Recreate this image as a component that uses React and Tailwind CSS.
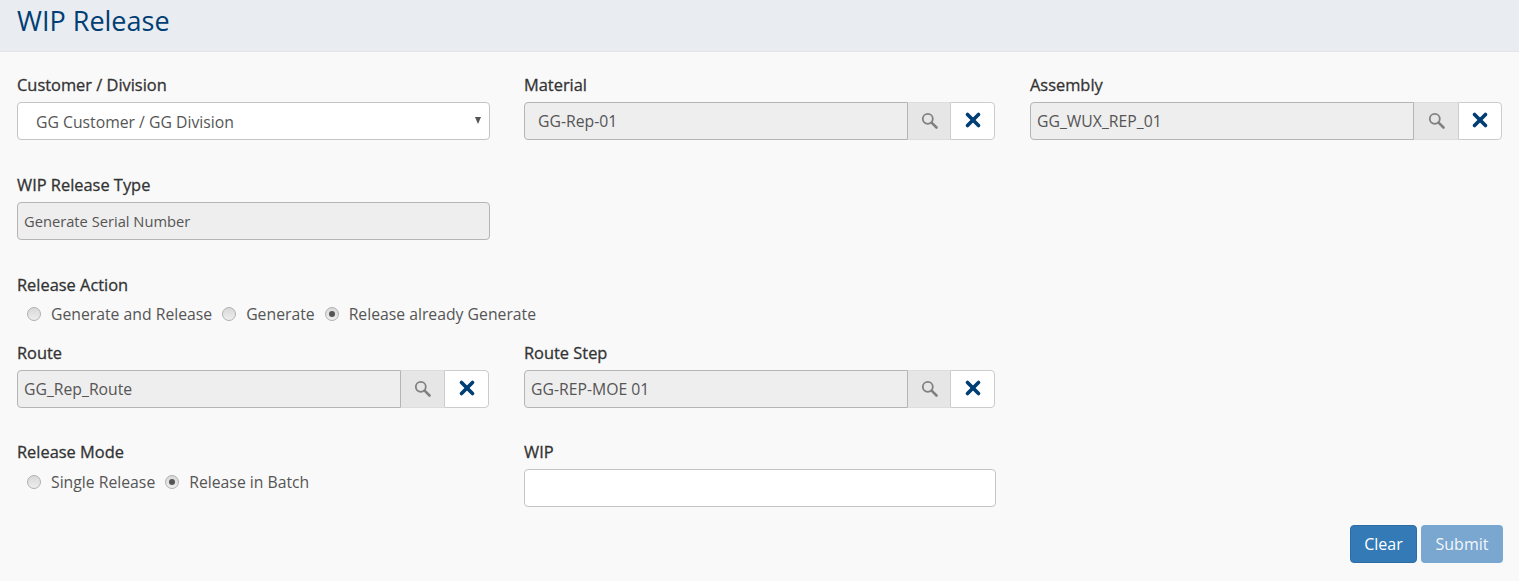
import { X } from 'lucide-react'

function Label({ children, className = '' }) {
  return <div className={`h-[20px] text-[16.4px] leading-[20px] font-medium text-[#333] [-webkit-text-stroke:0.3px_#333] ${className}`}>{children}</div>
}

function SearchGlyph() {
  return (
    <svg width="17" height="17" viewBox="0 0 17 17" className="-mt-[2px]">
      <circle cx="6.8" cy="6.8" r="5" fill="none" stroke="#808080" strokeWidth="1.8" />
      <path d="M10.6 10.6 L15.5 15.5" stroke="#808080" strokeWidth="2.6" strokeLinecap="round" />
    </svg>
  )
}

function LookupField({ label, value, indent = 'pl-[6px]', className = '', searchWidth = 'w-[43px]' }) {
  return (
    <div className={className}>
      <Label className="mb-[7px]">{label}</Label>
      <div className="flex h-[38px]">
        <div className={`w-[384px] flex items-center ${indent} pt-[2px] bg-[#eeeeee] border border-[#b5b5b5] rounded-l-[4px] text-[15.75px] text-[#555]`}>
          {value}
        </div>
        <div className={`${searchWidth} flex items-center justify-center bg-[#e6e6e6] border-y border-[#dddddd]`}>
          <SearchGlyph />
        </div>
        <div className="flex-1 flex items-center justify-center bg-white border border-[#cccccc] rounded-r-[4px]">
          <X size={22} strokeWidth={4} className="text-[#003e74] -mt-[2px]" />
        </div>
      </div>
    </div>
  )
}

function Radio({ label, checked }) {
  return (
    <label className="flex items-center gap-[10px]">
      <span className="w-[14px] h-[14px] rounded-full border border-[#b0b0b0] bg-gradient-to-b from-[#d8d8d8] to-[#eeeeee] flex items-center justify-center">
        {checked && <span className="w-[6px] h-[6px] rounded-full bg-[#555]" />}
      </span>
      <span className="text-[15.75px] leading-[20px] text-[#555]">{label}</span>
    </label>
  )
}

export default function App() {
  return (
    <div className="w-[1519px] h-[581px] overflow-hidden bg-[#f9f9f9] font-['Open_Sans',sans-serif]">
      <div className="h-[52px] bg-[#e9ecf1] border-b border-[#e2e4e8] pl-[17px]">
        <h1 className="text-[27px] leading-[42px] text-[#003e74]">WIP Release</h1>
      </div>

      <div className="px-[17px] pt-[23px]">
        <div className="grid grid-cols-[473px_472px_472px] gap-x-[34px]">
          <div>
            <Label className="mb-[7px]">Customer / Division</Label>
            <div className="relative h-[38px] flex items-center pl-[18px] pt-[4px] bg-white border border-[#c4c4c4] rounded-[4px] text-[15.75px] text-[#555]">
              GG Customer / GG Division
              <span className="absolute right-[8px] top-[14px] w-0 h-0 border-x-[3.5px] border-x-transparent border-t-[7px] border-t-[#555]" />
            </div>
          </div>
          <LookupField label="Material" value="GG-Rep-01" indent="pl-[13px]" className="mr-[1px]" searchWidth="w-[42px]" />
          <LookupField label="Assembly" value="GG_WUX_REP_01" searchWidth="w-[44px]" />
        </div>

        <div className="grid grid-cols-[473px_472px_472px] gap-x-[34px] mt-[35px]">
          <div>
            <Label className="mb-[7px]">WIP Release Type</Label>
            <div className="h-[38px] flex items-center px-[6px] bg-[#eeeeee] border border-[#b5b5b5] rounded-[4px] text-[14.7px] text-[#555]">
              Generate Serial Number
            </div>
          </div>
        </div>

        <div className="mt-[35px]">
          <Label>Release Action</Label>
          <div className="flex gap-[10px] pl-[10px] mt-[9px]">
            <Radio label="Generate and Release" />
            <Radio label="Generate" />
            <Radio label="Release already Generate" checked />
          </div>
        </div>

        <div className="grid grid-cols-[473px_472px_472px] gap-x-[34px] mt-[19px]">
          <LookupField label="Route" value="GG_Rep_Route" className="mr-[1px]" />
          <LookupField label="Route Step" value="GG-REP-MOE 01" className="mr-[1px]" searchWidth="w-[42px]" />
        </div>

        <div className="grid grid-cols-[473px_472px_472px] gap-x-[34px] mt-[34px]">
          <div>
            <Label>Release Mode</Label>
            <div className="flex gap-[10px] pl-[10px] mt-[10px]">
              <Radio label="Single Release" />
              <Radio label="Release in Batch" checked />
            </div>
          </div>
          <div>
            <Label className="mb-[7px]">WIP</Label>
            <div className="h-[38px] bg-white border border-[#c4c4c4] rounded-[4px]" />
          </div>
        </div>

        <div className="flex justify-end gap-[4px] mt-[18px] -mr-[1px]">
          <button className="w-[67px] h-[38px] bg-[#337ab7] border border-[#2e6da4] rounded-[4px] text-[16px] text-white">Clear</button>
          <button className="w-[82px] h-[38px] bg-[#7aa7d0] rounded-[4px] text-[16px] text-[#f2f6fa]">Submit</button>
        </div>
      </div>
    </div>
  )
}
